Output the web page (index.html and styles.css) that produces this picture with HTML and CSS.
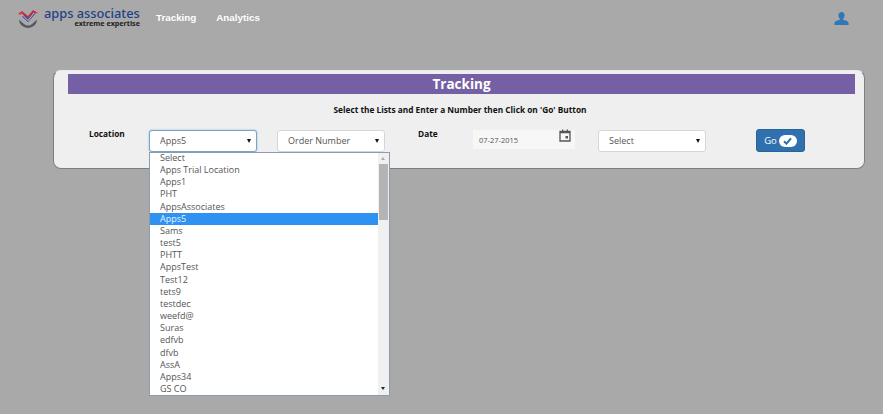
FILE: index.html
```html
<!DOCTYPE html>
<html lang="en">
<head>
  <meta charset="UTF-8">
  <meta name="viewport" content="width=device-width, initial-scale=1.0">
  <title>Tracking</title>
  <link rel="stylesheet" href="styles.css">
</head>
<body>

  <div class="topbar">
    <div class="logo">
      <svg class="logo-mark" width="22" height="21" viewBox="0 0 22 21">
        <path d="M2 10.500a9 8.500 0 0 0 18 0c-1.500 1.500-3.500 3-5 4.500-2.500 2-5.500 2-8 0-1.800-1.500-3.500-3-5-4.500z" fill="#55585c"/>
        <path d="M1 5l4-3 6 5 5-6 5 3-3 .5-7 8-6-6.500z" fill="#c8303f"/>
        <path d="M5 7.500l3-1.500 3 4 4.500-5.500 2.500.5-7 8z" fill="#2c4f8f"/>
        <path d="M4 4.500l7 7 6-7.500" fill="none" stroke="#e8e8ee" stroke-width=".8"/>
      </svg>
      <div class="logo-text">
        <div class="logo-name">apps associates</div>
        <div class="logo-sub">extreme expertise</div>
      </div>
    </div>
    <a class="nav-link nav-first">Tracking</a>
    <a class="nav-link">Analytics</a>
    <svg class="user-icon" width="15" height="13" viewBox="0 0 16 14">
      <path d="M8 0c2.100 0 3.300 1.500 3.300 3.600 0 1.500-.6 2.800-1.500 3.500v1.200c1.800.7 5.200 1.400 5.700 3.100l.2 2.600H.3l.2-2.600c.5-1.700 3.900-2.400 5.700-3.100V7.100c-.9-.7-1.500-2-1.500-3.500C4.700 1.500 5.900 0 8 0z" fill="#2f78b7"/>
    </svg>
  </div>

  <div class="panel">
    <div class="panel-title">Tracking</div>
    <div class="panel-hint">Select the Lists and Enter a Number then Click on 'Go' Button</div>

    <div class="form-row">
      <label class="lbl lbl-location">Location</label>

      <div class="select-wrap">
        <div class="fake-select is-open">Apps5</div>
        <div class="dropdown">
          <ul class="options">
            <li>Select</li>
            <li>Apps Trial Location</li>
            <li>Apps1</li>
            <li>PHT</li>
            <li>AppsAssociates</li>
            <li class="selected">Apps5</li>
            <li>Sams</li>
            <li>test5</li>
            <li>PHTT</li>
            <li>AppsTest</li>
            <li>Test12</li>
            <li>tets9</li>
            <li>testdec</li>
            <li>weefd@</li>
            <li>Suras</li>
            <li>edfvb</li>
            <li>dfvb</li>
            <li>AssA</li>
            <li>Apps34</li>
            <li>GS CO</li>
          </ul>
          <div class="scrollbar">
            <span class="arrow-up"></span>
            <span class="thumb"></span>
            <span class="arrow-down"></span>
          </div>
        </div>
      </div>

      <div class="select-wrap order">
        <div class="fake-select">Order Number</div>
      </div>

      <label class="lbl lbl-date">Date</label>

      <div class="date-box">
        <span>07-27-2015</span>
        <svg class="cal" width="12" height="13" viewBox="0 0 12 13">
          <path d="M1 2.500h10v9.500H1z" fill="none" stroke="#555" stroke-width="1.300"/>
          <path d="M1 2h10v2.200H1zM3 .5h1.300v2H3zM7.700 .5H9v2H7.700zM6.500 7h2.500v2.500H6.500z" fill="#555"/>
        </svg>
      </div>

      <div class="select-wrap last">
        <div class="fake-select">Select</div>
      </div>

      <button class="go-btn">Go
        <span class="go-pill">
          <svg width="9" height="8" viewBox="0 0 9 8"><path d="M1 4.200l2.400 2.400L8 1.300" fill="none" stroke="#2c6ea6" stroke-width="2"/></svg>
        </span>
      </button>
    </div>
  </div>

</body>
</html>
```

FILE: styles.css
```css
body {
  font-family: "Open Sans", Tahoma, sans-serif;
  background-color: #a9a9a9;
  margin: 0;
  height: 414px;
  overflow: hidden;
}

.topbar {
  display: flex;
  align-items: flex-start;
  height: 70px;
  box-sizing: border-box;
  padding: 7px 34px 0 17px;
}

.logo {
  display: flex;
  width: 139px;
}

.logo-mark {
  margin-top: 2px;
  flex: none;
}

.logo-text {
  margin-left: 5px;
  width: 96px;
}

.logo-name {
  font-family: "Noto Sans", sans-serif;
  font-size: 12.800px;
  font-weight: 500;
  line-height: 12px;
  color: #1d4286;
  white-space: nowrap;
}

.logo-sub {
  font-family: "Noto Sans", sans-serif;
  font-size: 7.200px;
  font-weight: bold;
  line-height: 8px;
  text-align: right;
  color: #222;
  white-space: nowrap;
}

.nav-link {
  font-family: "Liberation Sans", Arial, sans-serif;
  font-size: 9.800px;
  font-weight: bold;
  line-height: 22px;
  color: #fff;
  margin-left: 20px;
}

.nav-first {
  margin-left: 0;
}

.user-icon {
  margin-left: auto;
  margin-top: 5px;
}

.panel {
  margin: 0 18px 0 53px;
  height: 99px;
  box-sizing: border-box;
  padding: 3px 9px 0 14px;
  background-color: #efefef;
  border: 1px solid #7d7d8a;
  border-top-color: #e8e8f0;
  border-radius: 8px;
}

.panel-title {
  background-color: #7660a5;
  color: #fff;
  font-size: 13.500px;
  font-weight: bold;
  line-height: 20px;
  height: 20px;
  text-align: center;
}

.panel-hint {
  font-size: 8.300px;
  font-weight: bold;
  color: #111;
  text-align: center;
  margin-top: 9px;
  padding-right: 3px;
  line-height: 13px;
}

.form-row {
  display: flex;
  align-items: flex-start;
  margin-top: 14px;
  margin-left: 21px;
}

.lbl {
  font-size: 8.300px;
  font-weight: bold;
  color: #111;
  line-height: 12px;
  margin-top: -2px;
}

.lbl-location {
  width: 60px;
  flex: none;
}

.select-wrap {
  position: relative;
  width: 108px;
  flex: none;
}

.select-wrap.order {
  margin-left: 20px;
}

.select-wrap.last {
  margin-left: 23px;
}

.lbl-date {
  width: 55px;
  flex: none;
  margin-left: 33px;
}

.fake-select {
  position: relative;
  box-sizing: border-box;
  height: 22px;
  padding-left: 10px;
  background-color: #fff;
  border: 1px solid #d6d6d6;
  border-radius: 3px;
  font-size: 9px;
  line-height: 19px;
  color: #555;
}

.fake-select::after {
  content: "";
  position: absolute;
  right: 5px;
  top: 8px;
  border-left: 2.500px solid transparent;
  border-right: 2.500px solid transparent;
  border-top: 4px solid #111;
}

.fake-select.is-open {
  border-color: #7ba4c4;
  box-shadow: 0 0 2px #7fb2dc;
}

.dropdown {
  position: absolute;
  left: 0;
  top: 22px;
  width: 241px;
  height: 244px;
  box-sizing: border-box;
  display: flex;
  background-color: #fff;
  border: 1px solid #8b9bb0;
}

.options {
  list-style: none;
  margin: -1px 0 0;
  padding: 0;
  flex: 1;
  font-size: 9px;
  color: #555;
}

.options li {
  height: 12.160px;
  line-height: 12.160px;
  padding-left: 10px;
}

.options li.selected {
  background-color: #2f92f2;
  color: #e8f4ff;
}

.scrollbar {
  position: relative;
  width: 11px;
  background-color: #f0f0f0;
}

.thumb {
  position: absolute;
  left: 1px;
  right: 1px;
  top: 11px;
  height: 56px;
  background-color: #b4b4b4;
}

.arrow-up,
.arrow-down {
  position: absolute;
  left: 3px;
  border-left: 2.500px solid transparent;
  border-right: 2.500px solid transparent;
}

.arrow-up {
  top: 4px;
  border-bottom: 3px solid #aaa;
}

.arrow-down {
  bottom: 5px;
  border-top: 3px solid #222;
}

.date-box {
  display: flex;
  justify-content: space-between;
  width: 102px;
  height: 19px;
  flex: none;
  box-sizing: border-box;
  padding: 0 4px 0 6px;
  background-color: #f7f7f7;
  font-size: 7.500px;
  line-height: 20px;
  color: #555;
}

.cal {
  margin-top: -1px;
}

.go-btn {
  display: flex;
  align-items: center;
  justify-content: center;
  gap: 2px;
  width: 49px;
  height: 23px;
  margin-left: 50px;
  margin-top: -1px;
  padding: 0;
  flex: none;
  font-family: inherit;
  font-size: 9.500px;
  color: #fff;
  background-color: #2f70ae;
  border: 1px solid #2a6395;
  border-radius: 3px;
}

.go-pill {
  display: flex;
  align-items: center;
  justify-content: center;
  width: 18px;
  height: 12px;
  background-color: #fff;
  border-radius: 6px;
}
```
